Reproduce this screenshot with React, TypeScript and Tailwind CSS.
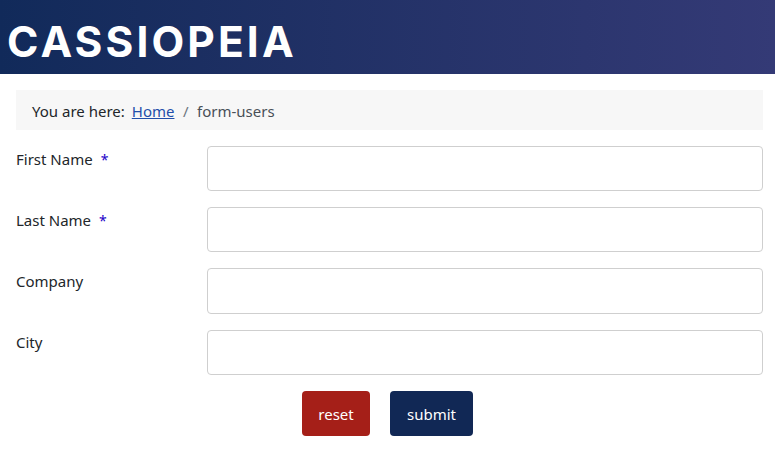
const fields = [
    { label: 'First Name', required: true },
    { label: 'Last Name', required: true },
    { label: 'Company', required: false },
    { label: 'City', required: false },
];

export default function App() {
    return (
        <div className="h-[454px] overflow-hidden bg-white font-['Noto_Sans',sans-serif] text-[15px] text-[#22262a]">
            <header className="flex h-[74px] items-center bg-gradient-to-r from-[#112a5a] to-[#343a76] pt-[11px] pl-[7px]">
                <span className="font-['Inter',sans-serif] text-[42.5px] leading-none font-bold tracking-[3.1px] text-white">
                    CASSIOPEIA
                </span>
            </header>

            <main className="px-3 pt-4 pr-3 pl-4">
                <nav className="flex h-10 items-center bg-[#f7f7f7] pt-[2px] pl-4">
                    <span>You are here:</span>
                    <a href="#" className="ml-[7px] text-[#224faa] underline">
                        Home
                    </a>
                    <span className="mx-[8.5px] text-[#6d757e]">/</span>
                    <span className="text-[#495057]">form-users</span>
                </nav>

                <form className="mt-4 flex flex-col gap-4">
                    {fields.map((field) => (
                        <div key={field.label} className="flex">
                            <label className="w-[191px] shrink-0 pt-[0.8px] leading-6">
                                {field.label}
                                {field.required && (
                                    <span className="ml-2 text-[14px] text-[#1c00c8]">*</span>
                                )}
                            </label>
                            <input
                                type="text"
                                className="h-[45.2px] w-full rounded border border-[#cfcfcf] bg-white"
                            />
                        </div>
                    ))}

                    <div className="flex gap-5 pl-[286px]">
                        <button
                            type="reset"
                            className="h-[45px] w-[68px] rounded bg-[#a51f18] pt-[1px] text-white"
                        >
                            reset
                        </button>
                        <button
                            type="submit"
                            className="h-[45px] w-[83px] rounded bg-[#112855] pt-[1px] text-white"
                        >
                            submit
                        </button>
                    </div>
                </form>
            </main>
        </div>
    );
}
